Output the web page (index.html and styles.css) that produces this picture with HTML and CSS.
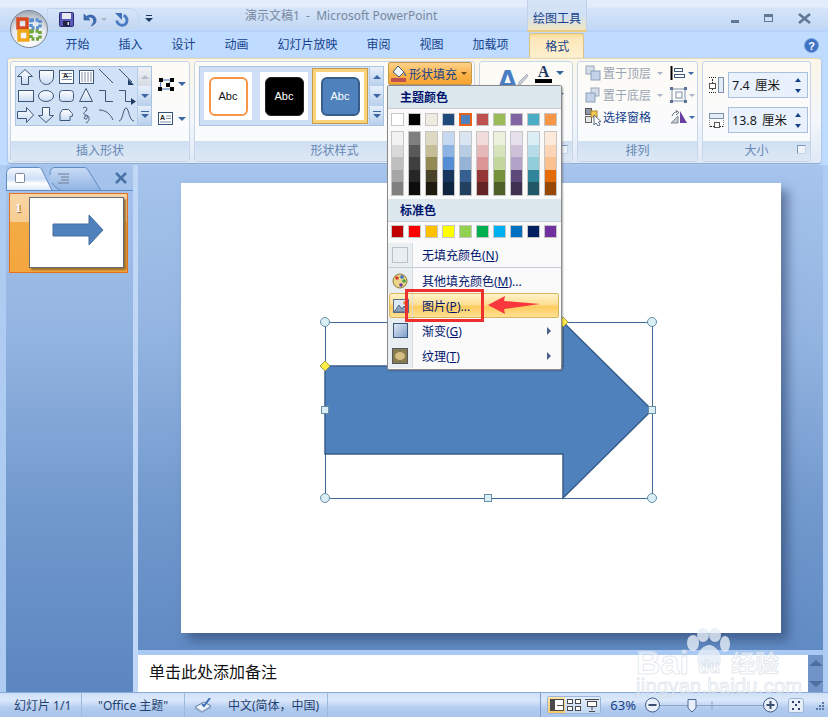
FILE: index.html
```html
<!DOCTYPE html>
<html lang="zh-CN">
<head>
    <meta charset="UTF-8">
    <title>演示文稿1 - Microsoft PowerPoint</title>
    <link rel="stylesheet" href="styles.css">
</head>
<body>
<div class="app">

    <!-- Title bar -->
    <header class="titlebar">
        <div class="qat">
            <svg class="qat-save" width="15" height="15" viewBox="0 0 15 15">
                <rect x="0.5" y="0.5" width="14" height="14" rx="1" fill="#5a58b8" stroke="#2c2a70"/>
                <rect x="3" y="1" width="9" height="6" fill="#e6e8f4"/>
                <rect x="4" y="9" width="7" height="5" fill="#23233f"/>
                <rect x="8.5" y="10" width="1.5" height="3" fill="#dcdcec"/>
            </svg>
            <svg class="qat-undo" width="14" height="15" viewBox="0 0 14 15">
                <path d="M1 2 V8 H7 L5 6 C7 4.500 10 5 10.500 8 C10.800 10 10 12 8 14 C11.500 13 13.500 10.500 13 7.500 C12.500 3.500 7.500 1.500 3.500 4.500 Z" fill="#3f6fb5" stroke="#2a5493" stroke-width="0.6"/>
            </svg>
            <span class="caret caret-gray qat-caret"></span>
            <svg class="qat-redo" width="15" height="15" viewBox="0 0 15 15">
                <path d="M9.500 3.500 A5 5 0 1 1 3 8.500" fill="none" stroke="#4a7cc2" stroke-width="3"/>
                <path d="M1 1 H8 V8 Z" fill="#3f6fb5"/>
            </svg>
        </div>
        <svg class="qat-more" width="8" height="8" viewBox="0 0 8 8">
            <rect x="1" y="0" width="6" height="1" fill="#1d3a63"/>
            <path d="M0 3 H8 L4 7 Z" fill="#1d3a63"/>
        </svg>
        <div class="doc-title">演示文稿1&nbsp; -&nbsp; Microsoft PowerPoint</div>
        <div class="context-tab">绘图工具</div>
        <div class="window-btns">
            <span class="btn-min"></span>
            <span class="btn-max"></span>
            <svg width="13" height="11" viewBox="0 0 13 11"><path d="M1 1 L12 10 M12 1 L1 10" stroke="#5f7894" stroke-width="2.600"/></svg>
        </div>
    </header>

    <!-- Tabs -->
    <nav class="tabs">
        <span class="tab">开始</span>
        <span class="tab">插入</span>
        <span class="tab">设计</span>
        <span class="tab">动画</span>
        <span class="tab">幻灯片放映</span>
        <span class="tab">审阅</span>
        <span class="tab">视图</span>
        <span class="tab">加载项</span>
        <span class="tab tab-active">格式</span>
        <svg class="help" width="15" height="15" viewBox="0 0 15 15">
            <circle cx="7.500" cy="7.500" r="7" fill="#3e72c4" stroke="#7fa3d8"/>
            <text x="7.500" y="11.500" text-anchor="middle" class="help-mark">?</text>
        </svg>
    </nav>

    <!-- Ribbon -->
    <section class="ribbon">

        <div class="group group-shapes">
            <div class="group-body">
                <div class="gallery gallery-shapes">
                    <svg class="shape-sheet" width="122" height="60" viewBox="0 0 122 60">
                        <defs>
                            <linearGradient id="shapeFill" x1="0" y1="0" x2="0" y2="1">
                                <stop offset="0" stop-color="#ffffff"/>
                                <stop offset="1" stop-color="#c9dcf3"/>
                            </linearGradient>
                        </defs>
                        <g fill="url(#shapeFill)" stroke="#3d5778">
                            <path d="M10 3.500 L17.500 10.500 H13.500 V18.500 H6.500 V10.500 H2.500 Z"/>
                            <path d="M24.500 4.500 H38.500 V11 C38.500 15 35 18.500 31.500 18.500 C27.500 18.500 24.500 15 24.500 11 Z"/>
                            <rect x="44.500" y="4.500" width="14" height="13" fill="#fff"/>
                            <rect x="64.500" y="4.500" width="14" height="13" fill="#fff"/>
                            <rect x="3.500" y="24.500" width="15" height="11"/>
                            <ellipse cx="31" cy="30" rx="7.500" ry="5.500"/>
                            <rect x="44.500" y="24.500" width="14" height="11" rx="3"/>
                            <path d="M71 22.500 L77.500 35.500 H64.500 Z"/>
                            <path d="M2.500 45.500 H11.500 V41.500 L18.500 49 L11.500 56.500 V52.500 H2.500 Z"/>
                            <path d="M27.500 41.500 H34.500 V49.500 H38.500 L31 56.500 L23.500 49.500 H27.500 Z"/>
                            <path d="M47.500 43.500 H53.500 L56 46 C57 47 58 48 57.500 50 L55 50.500 V54.500 H45 V47.500 Z"/>
                        </g>
                        <g fill="none" stroke="#3d5778">
                            <path d="M84 3 L98 17"/>
                            <path d="M104 3 L117 16"/>
                            <path d="M84 24.500 H90.500 V35.500 H98"/>
                            <path d="M104 24.500 H110.500 V35.500 H116"/>
                            <path d="M68 42 C71 40 73 42 71 45 C68 47 68 49 71 49 C74 50 72 54 70 53 C68 52 70 49 73 50 C75 51 74 56 71 57"/>
                            <path d="M84 44 C90 44 95 47 98 54"/>
                            <path d="M104 55 C108 55 108 42 111 42 C114 42 114 55 119 55"/>
                            <path d="M46.500 7.500 H50 M52 7.500 H57 M52 10.500 H57 M46.500 13.500 H57" stroke="#7d8ea5"/>
                            <path d="M67 6 V16 M70 6 V16 M73 6 V16 M76 6 V16" stroke="#7d8ea5"/>
                        </g>
                        <path d="M113 13 L119 19 H113 Z M116 32 L121 35.500 L116 39 Z" fill="#233e66"/>
                        <text x="48" y="12" class="sheet-letter">A</text>
                    </svg>
                    <div class="gallery-scroll">
                        <span class="scroll-btn scroll-off"><span class="caret caret-up"></span></span>
                        <span class="scroll-btn"><span class="caret"></span></span>
                        <span class="scroll-btn"><span class="caret caret-more"></span></span>
                    </div>
                </div>
                <div class="edit-col">
                    <div class="edit-item">
                        <svg width="18" height="14" viewBox="0 0 18 14">
                            <path d="M4 3 H15 L11 7.500 L15 12 H3 Z" fill="none" stroke="#3f6fb5"/>
                            <g fill="#000">
                                <rect x="2" y="1" width="4" height="4"/><rect x="13" y="1" width="4" height="4"/>
                                <rect x="9" y="6" width="4" height="4"/><rect x="1" y="10" width="4" height="4"/>
                                <rect x="13" y="10" width="4" height="4"/>
                            </g>
                        </svg>
                        <span class="caret"></span>
                    </div>
                    <div class="edit-item edit-item-low">
                        <svg width="15" height="13" viewBox="0 0 15 13">
                            <rect x="0.500" y="0.500" width="14" height="12" fill="#fff" stroke="#34527a"/>
                            <path d="M8 4 H13 M8 6.500 H13 M2 10 H13" stroke="#7d8ea5"/>
                            <text x="2" y="8" class="sheet-letter">A</text>
                        </svg>
                        <span class="caret"></span>
                    </div>
                </div>
            </div>
            <div class="group-label">插入形状</div>
        </div>

        <div class="group group-styles">
            <div class="group-body">
                <div class="gallery gallery-styles">
                    <div class="style-card"><span class="style-box style-outline">Abc</span></div>
                    <div class="style-card"><span class="style-box style-black">Abc</span></div>
                    <div class="style-card style-card-on"><span class="style-box style-blue">Abc</span></div>
                    <div class="gallery-scroll">
                        <span class="scroll-btn"><span class="caret caret-up"></span></span>
                        <span class="scroll-btn"><span class="caret"></span></span>
                        <span class="scroll-btn"><span class="caret caret-more"></span></span>
                    </div>
                </div>
                <div class="fill-btn">
                    <svg width="17" height="17" viewBox="0 0 17 17">
                        <path d="M7 1 L13 7 L8 12 L2 7 Z" fill="#f3f6fb" stroke="#3d5778"/>
                        <path d="M13 7 C15 9 15.500 11 14.500 11 C13.500 11 13 9 13 7Z" fill="#2f5fa8"/>
                        <rect x="0" y="13" width="15" height="4" fill="#c0504d"/>
                    </svg>
                    <span>形状填充</span>
                    <span class="caret caret-dark"></span>
                </div>
            </div>
            <div class="group-label">形状样式</div>
        </div>

        <div class="group group-art">
            <div class="group-body">
                <span class="art-a">A</span>
                <svg class="art-pen" width="10" height="12" viewBox="0 0 10 12">
                    <path d="M9 0 L10 2 L3 10 L0 12 L1 8 Z" fill="#c9ced6" stroke="#8a93a0" stroke-width="0.600"/>
                </svg>
                <div class="art-color">
                    <span class="art-letter">A</span>
                    <span class="art-bar"></span>
                </div>
                <div class="art-carets">
                    <span class="caret"></span>
                    <span class="caret"></span>
                </div>
            </div>
            <div class="group-label"><span class="launcher"></span></div>
        </div>

        <div class="group group-arrange">
            <div class="group-body">
                <div class="arrange-col">
                    <div class="arrange-row row-off">
                        <svg width="16" height="16" viewBox="0 0 16 16"><rect x="1" y="1" width="8" height="8" fill="#d5dde8" stroke="#9aa8bb"/><rect x="6" y="6" width="9" height="9" fill="#c3d2e6" stroke="#8ba0bb"/></svg>
                        <span>置于顶层</span><span class="caret caret-gray"></span>
                    </div>
                    <div class="arrange-row row-off">
                        <svg width="16" height="16" viewBox="0 0 16 16"><rect x="6" y="1" width="8" height="8" fill="#d5dde8" stroke="#9aa8bb"/><rect x="1" y="6" width="9" height="9" fill="#c3d2e6" stroke="#8ba0bb"/></svg>
                        <span>置于底层</span><span class="caret caret-gray"></span>
                    </div>
                    <div class="arrange-row">
                        <svg width="16" height="18" viewBox="0 0 16 18"><rect x="0.500" y="0.500" width="6" height="6" fill="#8f98a6" stroke="#555"/><rect x="0.500" y="8.500" width="6" height="6" fill="#e6e6e6" stroke="#666"/><rect x="6" y="3" width="6" height="6" fill="#f5c84f" stroke="#a9862c"/><path d="M9 7 V17 L11 15 L13 18 L15 17 L13.500 14 L16 13.500 Z" fill="#fff" stroke="#5b6c85"/></svg>
                        <span>选择窗格</span>
                    </div>
                </div>
                <div class="arrange-tools">
                    <div class="tool-item">
                        <svg width="16" height="14" viewBox="0 0 16 14"><path d="M1.500 0 V14" stroke="#000" stroke-width="2"/><rect x="4.500" y="2.500" width="8" height="3" fill="#fff" stroke="#3d5778"/><rect x="4.500" y="8.500" width="10" height="3" fill="#fff" stroke="#3d5778"/></svg>
                        <span class="caret"></span>
                    </div>
                    <div class="tool-item tool-off">
                        <svg width="17" height="16" viewBox="0 0 17 16"><rect x="2" y="2" width="13" height="12" fill="none" stroke="#7d90aa"/><rect x="6" y="5" width="6" height="6" fill="none" stroke="#7d90aa"/><g fill="#5b7396"><rect x="0" y="0" width="3" height="3"/><rect x="14" y="0" width="3" height="3"/><rect x="0" y="13" width="3" height="3"/><rect x="14" y="13" width="3" height="3"/></g></svg>
                        <span class="caret caret-gray"></span>
                    </div>
                    <div class="tool-item">
                        <svg width="17" height="14" viewBox="0 0 17 14"><path d="M1 13 L8 6 V13 Z" fill="#c9ced6" stroke="#7d8794"/><path d="M10 1 L17 13 H10 Z" fill="#6a3fa0"/><path d="M2 6 C3 3 5 2 7 2 L6 0.500 L9 2.500 L6 5" fill="none" stroke="#5f6f85"/></svg>
                        <span class="caret"></span>
                    </div>
                </div>
            </div>
            <div class="group-label">排列</div>
        </div>

        <div class="group group-size">
            <div class="group-body">
                <div class="size-row">
                    <svg width="15" height="16" viewBox="0 0 15 16">
                        <rect x="9.500" y="0.500" width="5" height="15" fill="#e4ecf7" stroke="#7d90aa"/>
                        <path d="M0 0.500 H7 M0 15.500 H7" stroke="#222" stroke-dasharray="1 1"/>
                        <path d="M3.500 2 V14" stroke="#222" stroke-dasharray="2 1"/>
                        <rect x="0.500" y="6.500" width="6" height="5" fill="#fff" stroke="#555"/>
                    </svg>
                    <div class="size-input"><span>7.4 厘米</span><span class="spinner"><span class="caret caret-up caret-navy"></span><span class="caret caret-navy"></span></span></div>
                </div>
                <div class="size-row">
                    <svg width="15" height="15" viewBox="0 0 15 15">
                        <rect x="0.500" y="0.500" width="14" height="5" fill="#e4ecf7" stroke="#7d90aa"/>
                        <path d="M0 7 V14 M15 7 V14" stroke="#222" stroke-dasharray="1 1"/>
                        <path d="M1 13.500 H14" stroke="#222" stroke-dasharray="2 1"/>
                        <rect x="5.500" y="9.500" width="5" height="5" fill="#fff" stroke="#555"/>
                    </svg>
                    <div class="size-input"><span>13.8 厘米</span><span class="spinner"><span class="caret caret-up caret-navy"></span><span class="caret caret-navy"></span></span></div>
                </div>
            </div>
            <div class="group-label">大小<span class="launcher"></span></div>
        </div>
    </section>

    <!-- Workspace -->
    <main class="workspace">
        <aside class="side-pane">
            <svg class="pane-tabs" width="127" height="24" viewBox="0 0 127 24">
                <defs>
                    <linearGradient id="tabOn" x1="0" y1="0" x2="0" y2="1"><stop offset="0" stop-color="#f4f8fe"/><stop offset="0.5" stop-color="#cfe0f7"/><stop offset="0.7" stop-color="#ffffff"/><stop offset="1" stop-color="#d7e6fa"/></linearGradient>
                    <linearGradient id="tabOff" x1="0" y1="0" x2="0" y2="1"><stop offset="0" stop-color="#c9dcf6"/><stop offset="1" stop-color="#90b3e2"/></linearGradient>
                </defs>
                <path d="M46 23.500 L36 3 C35 1 34 0.500 32 0.500 H7 C4 0.500 1 2 0.500 6 V23.500" fill="url(#tabOn)" stroke="#5f8cc4"/>
                <path d="M44 8 C44 2 46 0.500 49 0.500 H78 C80 0.500 81 1.500 82 3 L95 23.500 H55 C52 22 48 20 46 16" fill="url(#tabOff)" stroke="#5f8cc4"/>
                <path d="M0 23.500 H127" stroke="#5f8cc4"/>
                <rect x="9.500" y="6.500" width="9" height="9" rx="1" fill="#fff" stroke="#7b8797"/>
                <path d="M52 7 H63 M55 10 H63 M55 13 H63 M52 16 H63" stroke="#6d7c92"/>
                <path d="M110 6 L120 16 M120 6 L110 16" stroke="#4a74a8" stroke-width="2.500"/>
            </svg>
            <div class="thumb">
                <span class="thumb-num">1</span>
                <div class="thumb-slide">
                    <svg width="93" height="69" viewBox="0 0 93 69">
                        <path d="M23 26 H59 V17 L73 32 L59 47 V38 H23 Z" fill="#4f81bd" stroke="#446f9f"/>
                    </svg>
                </div>
            </div>
        </aside>

        <div class="main-pane">
            <div class="slide-pane">
                <div class="slide">
                    <svg class="slide-canvas" width="600" height="450" viewBox="0 0 600 450">
                        <rect x="144.500" y="139.500" width="327" height="176" fill="none" stroke="#3f6a97"/>
                        <path d="M144 183 H382 V139 L471 227 L382 315 V271 H144 Z" fill="#4f81bd" stroke="#385d8a" stroke-width="1.500"/>
                        <g fill="#d9eef5" stroke="#6b8da6">
                            <circle cx="144" cy="139" r="4.500"/>
                            <circle cx="471" cy="139" r="4.500"/>
                            <circle cx="144" cy="315" r="4.500"/>
                            <circle cx="471" cy="315" r="4.500"/>
                            <rect x="140.500" y="223.500" width="7" height="7"/>
                            <rect x="467.500" y="223.500" width="7" height="7"/>
                            <rect x="303.500" y="311.500" width="7" height="7"/>
                        </g>
                        <g fill="#ffee44" stroke="#a09a50">
                            <path d="M144 178 L149 183 L144 188 L139 183 Z"/>
                            <path d="M382 134 L387 139 L382 144 L377 139 Z"/>
                        </g>
                    </svg>
                </div>
            </div>
            <div class="notes-row">
                <div class="notes">单击此处添加备注</div>
                <div class="notes-scroll">
                    <span class="caret caret-up caret-slate"></span>
                    <span class="caret caret-slate"></span>
                </div>
            </div>
        </div>
    </main>

    <!-- Status bar -->
    <footer class="statusbar">
        <span class="status-item status-slide">幻灯片 1/1</span>
        <span class="status-item status-theme">"Office 主题"</span>
        <span class="status-item status-lang">
            <svg width="18" height="15" viewBox="0 0 18 15">
                <path d="M1 9 L10 4 L17 8 L8 14 Z" fill="#eef3fb" stroke="#5f7fa8"/>
                <path d="M1 9 L8 13 L17 8 V10 L8 15 L1 11 Z" fill="#8fa8c9"/>
                <path d="M8 6 L10 8 L16 0" fill="none" stroke="#3f6fb5" stroke-width="2"/>
            </svg>
            <span>中文(简体，中国)</span>
        </span>
        <div class="status-right">
            <div class="view-btns">
                <span class="view-btn view-btn-on">
                    <svg width="14" height="12" viewBox="0 0 14 12"><rect x="0.500" y="0.500" width="13" height="11" fill="#fff" stroke="#4a4a4a"/><rect x="1" y="1" width="4" height="10" fill="#4a4a4a"/><path d="M7 6.500 H13" stroke="#4a4a4a"/></svg>
                </span>
                <span class="view-btn">
                    <svg width="14" height="12" viewBox="0 0 14 12"><g fill="#fff" stroke="#4a4a4a"><rect x="0.500" y="0.500" width="5" height="4"/><rect x="8.500" y="0.500" width="5" height="4"/><rect x="0.500" y="7.500" width="5" height="4"/><rect x="8.500" y="7.500" width="5" height="4"/></g></svg>
                </span>
                <span class="view-btn">
                    <svg width="14" height="13" viewBox="0 0 14 13"><path d="M0 0.500 H14" stroke="#4a4a4a"/><rect x="2.500" y="2.500" width="9" height="5" fill="#fff" stroke="#4a4a4a"/><path d="M7 8 V11 M4 12.500 H10" stroke="#4a4a4a"/></svg>
                </span>
            </div>
            <span class="zoom-pct">63%</span>
            <svg class="zoom-ctl" width="183" height="20" viewBox="0 0 183 20">
                <path d="M14 10.500 H118" stroke="#8ba4c8"/>
                <path d="M67 6 V15" stroke="#8ba4c8"/>
                <g fill="#e9f0fa" stroke="#3f5f8a">
                    <circle cx="7.500" cy="10" r="7"/>
                    <circle cx="125.500" cy="10" r="7"/>
                </g>
                <path d="M3.500 10 H11.500" stroke="#3a4f70" stroke-width="2"/>
                <path d="M121.500 10 H129.500 M125.500 6 V14" stroke="#3a4f70" stroke-width="2"/>
                <path d="M43 4.500 H51 V13 L47 17 L43 13 Z" fill="#e8effa" stroke="#4a6a96"/>
                <rect x="143.500" y="3.500" width="15" height="14" rx="2" fill="#e6eefa" stroke="#9fb5d4"/>
                <g fill="#2f4466"><rect x="147" y="6" width="2" height="2"/><rect x="153" y="6" width="2" height="2"/><rect x="147" y="13" width="2" height="2"/><rect x="153" y="13" width="2" height="2"/><rect x="150" y="9" width="2" height="2"/></g>
                <g fill="#5b7aa6"><rect x="177" y="7" width="2" height="2"/><rect x="174" y="10" width="2" height="2"/><rect x="177" y="10" width="2" height="2"/><rect x="171" y="13" width="2" height="2"/><rect x="174" y="13" width="2" height="2"/><rect x="177" y="13" width="2" height="2"/></g>
            </svg>
        </div>
    </footer>

    <!-- Office button sits over the title bar and the tabs -->
    <div class="office-btn">
        <svg width="38" height="38" viewBox="0 0 38 38">
            <defs>
                <radialGradient id="orb" cx="0.500" cy="0.800" r="0.800"><stop offset="0" stop-color="#ffffff"/><stop offset="0.600" stop-color="#e6e9ef"/><stop offset="1" stop-color="#9aa3af"/></radialGradient>
            </defs>
            <circle cx="19" cy="19" r="18.500" fill="url(#orb)" stroke="#7d8794"/>
            <path d="M8 9 H17 V18 H8 Z" fill="none" stroke="#d64a20" stroke-width="3.500"/>
            <path d="M21 10 H30 V18 H21 Z" fill="none" stroke="#5a8fd0" stroke-width="3.500" stroke-dasharray="3 1.500"/>
            <path d="M9 21 H18 V30 H9 Z" fill="none" stroke="#f0a818" stroke-width="3.500"/>
            <path d="M21 21 H30 V29 H21 Z" fill="none" stroke="#6fa53a" stroke-width="3.500" stroke-dasharray="3 1.500"/>
        </svg>
    </div>

    <!-- Fill colour menu -->
    <div class="menu">
        <div class="menu-head">主题颜色</div>
        <div class="swatch-row swatch-row-top">
            <span class="swatch th-1"></span><span class="swatch th-2"></span><span class="swatch th-3"></span><span class="swatch th-4"></span><span class="swatch th-5 swatch-on"></span>
            <span class="swatch th-6"></span><span class="swatch th-7"></span><span class="swatch th-8"></span><span class="swatch th-9"></span><span class="swatch th-10"></span>
        </div>
        <div class="swatch-row swatch-row-tints">
            <span class="tint tn-1"></span><span class="tint tn-2"></span><span class="tint tn-3"></span><span class="tint tn-4"></span><span class="tint tn-5"></span>
            <span class="tint tn-6"></span><span class="tint tn-7"></span><span class="tint tn-8"></span><span class="tint tn-9"></span><span class="tint tn-10"></span>
        </div>
        <div class="menu-head menu-head-std">标准色</div>
        <div class="swatch-row swatch-row-std">
            <span class="swatch st-1"></span><span class="swatch st-2"></span><span class="swatch st-3"></span><span class="swatch st-4"></span><span class="swatch st-5"></span>
            <span class="swatch st-6"></span><span class="swatch st-7"></span><span class="swatch st-8"></span><span class="swatch st-9"></span><span class="swatch st-10"></span>
        </div>
        <div class="menu-row menu-row-short">
            <span class="menu-icon"><span class="no-fill"></span></span>
            <span class="menu-text">无填充颜色(<u>N</u>)</span>
        </div>
        <div class="menu-sep"></div>
        <div class="menu-row">
            <span class="menu-icon">
                <svg width="16" height="16" viewBox="0 0 16 16">
                    <ellipse cx="8" cy="8" rx="7" ry="7" fill="#e9d58a" stroke="#8e7a38"/>
                    <circle cx="5" cy="5" r="1.800" fill="#d9392a"/><circle cx="10" cy="4" r="1.800" fill="#2f6fc9"/>
                    <circle cx="12" cy="8" r="1.800" fill="#3ea040"/><circle cx="9" cy="12" r="1.800" fill="#6a3fa0"/>
                </svg>
            </span>
            <span class="menu-text">其他填充颜色(<u>M</u>)...</span>
        </div>
        <div class="menu-row menu-row-hot">
            <span class="menu-icon">
                <svg width="16" height="16" viewBox="0 0 16 16">
                    <rect x="0.500" y="1.500" width="15" height="13" fill="#dbe9f8" stroke="#5d6f88"/>
                    <path d="M1 14 L6 7 L9 11 L11 8 L15 14 Z" fill="#8da3bd" stroke="#55677f"/>
                    <circle cx="12" cy="5" r="1.800" fill="#f07b2a"/>
                </svg>
            </span>
            <span class="menu-text">图片(<u>P</u>)...</span>
        </div>
        <div class="menu-row">
            <span class="menu-icon"><span class="grad-fill"></span></span>
            <span class="menu-text">渐变(<u>G</u>)</span>
            <span class="submenu"></span>
        </div>
        <div class="menu-row">
            <span class="menu-icon"><span class="texture-fill"><span></span></span></span>
            <span class="menu-text">纹理(<u>T</u>)</span>
            <span class="submenu"></span>
        </div>
    </div>

    <!-- Red annotations from the author of the screenshot -->
    <div class="note-box"></div>
    <svg class="note-arrow" width="52" height="20" viewBox="0 0 52 20">
        <path d="M0 10 L17 1 L16 6 L52 9 L16 14 L17 19 Z" fill="#f8383c"/>
    </svg>

    <!-- Watermark -->
    <div class="watermark">
        <svg class="wm-paw" width="46" height="40" viewBox="0 0 46 40">
            <g fill="#e6edf6" fill-opacity="0.8">
                <ellipse cx="8" cy="15" rx="6" ry="8"/>
                <ellipse cx="18" cy="7" rx="6" ry="7"/>
                <ellipse cx="30" cy="7" rx="6" ry="7"/>
                <ellipse cx="40" cy="16" rx="5" ry="8"/>
                <path d="M12 32 C12 22 20 17 24 17 C30 17 36 24 36 32 C36 38 30 40 24 40 C18 40 12 38 12 32 Z"/>
            </g>
        </svg>
        <span class="wm-bai">Bai</span>
        <span class="wm-du">du</span>
        <span class="wm-cn">经验</span>
        <span class="wm-url">jingyan.baidu.com</span>
    </div>
</div>
</body>
</html>
```

FILE: styles.css
```css
* {
    box-sizing: border-box;
}

html, body {
    margin: 0;
    padding: 0;
}

body {
    width: 828px;
    height: 717px;
    overflow: hidden;
    font-family: "Noto Sans", "Noto Sans CJK SC", sans-serif;
    font-size: 12px;
    color: #15428b;
}

svg {
    display: block;
    flex: none;
}

.app {
    position: relative;
    width: 828px;
    height: 717px;
    display: flex;
    flex-direction: column;
    background-color: #bfdbff;
    overflow: hidden;
}

/* Small dropdown triangles, used all over the ribbon */
.caret {
    display: inline-block;
    width: 0;
    height: 0;
    flex: none;
    border-left: 4px solid transparent;
    border-right: 4px solid transparent;
    border-top: 4px solid #3a66a6;
}

.caret-up {
    border-top: 0;
    border-bottom: 4px solid #3a66a6;
}

.caret-gray {
    border-top-color: #a8b4c4;
}

.caret-dark {
    border-top-color: #6a4a10;
}

.caret-navy {
    border-top-color: #15428b;
    border-bottom-color: #15428b;
}

.caret-slate {
    border-left-width: 7px;
    border-right-width: 7px;
    border-top-width: 6px;
    border-bottom-width: 6px;
    border-top-color: #4d6f9e;
    border-bottom-color: #4d6f9e;
}

.caret-more {
    position: relative;
}

.caret-more::before {
    content: "";
    position: absolute;
    left: -4px;
    top: -7px;
    width: 8px;
    height: 1px;
    background-color: #3a66a6;
}

/* Title bar */
.titlebar {
    display: flex;
    align-items: center;
    height: 32px;
    flex: none;
    background: linear-gradient(#e3edfb 0, #e3edfb 7px, #d5e4f8 8px, #c6daf6 26px, #bcd6fb 31px, #a9cbf5 32px);
}

.qat {
    display: flex;
    align-items: center;
    width: 93px;
    height: 22px;
    margin-left: 47px;
    margin-top: 6px;
    border: 1px solid #c3d6ef;
    border-radius: 0 11px 11px 0;
    background: linear-gradient(#d6e5f9, #c2d6f2);
}

.qat-save {
    margin-left: 11px;
}

.qat-undo {
    margin-left: 9px;
}

.qat-caret {
    margin-left: 4px;
    border-left-width: 3px;
    border-right-width: 3px;
    border-top-width: 3px;
}

.qat-redo {
    margin-left: 7px;
}

.qat-more {
    margin-left: 5px;
    margin-top: 6px;
}

.doc-title {
    width: 282px;
    margin-left: 92px;
    margin-top: -2px;
    color: #77889f;
    font-size: 12px;
    white-space: nowrap;
}

.context-tab {
    width: 60px;
    height: 32px;
    padding-top: 9px;
    text-align: center;
    color: #15428b;
    border-left: 1px solid #c0d0e6;
    border-right: 1px solid #c0d0e6;
    border-bottom: 2px solid #e8cb7e;
    background: linear-gradient(#d7e4f6, #d0e0f5 50%, #f2e6c2);
}

.window-btns {
    display: flex;
    align-items: center;
    gap: 25px;
    margin-left: auto;
    margin-right: 17px;
    margin-top: 4px;
}

.btn-min {
    width: 8px;
    height: 3px;
    margin-top: 6px;
    background-color: #5f7894;
}

.btn-max {
    width: 9px;
    height: 8px;
    border: 1px solid #5f7894;
    border-top-width: 3px;
}

/* Tabs */
.tabs {
    display: flex;
    align-items: center;
    height: 26px;
    flex: none;
    padding-left: 51px;
}

.tab {
    padding: 0 14.5px;
    line-height: 26px;
    color: #15428b;
    white-space: nowrap;
}

.tab-active {
    margin-left: 6px;
    padding: 0 15px;
    width: 55px;
    height: 26px;
    margin-top: 1px;
    text-align: center;
    border: 1px solid #dcc184;
    border-bottom: 0;
    border-radius: 3px 3px 0 0;
    background: linear-gradient(#fbd98d 0, #fde7b8 4px, #fdf0d0 100%);
}

.help {
    margin-left: auto;
    margin-right: 9px;
}

.help-mark {
    font-family: "Liberation Sans", sans-serif;
    font-size: 11px;
    font-weight: bold;
    fill: #fff;
}

/* Ribbon */
.ribbon {
    display: flex;
    gap: 4px;
    height: 105px;
    flex: none;
    margin: 0 7px 0 8px;
    padding: 2px 0 0 2px;
    border-top: 1px solid #e8d9b0;
    border-radius: 3px;
    background: linear-gradient(#fbf6e8, #f3f6fb 60%, #dfe9f6);
    box-shadow: 0 1px 2px #7e9cc4;
}

.group {
    display: flex;
    flex-direction: column;
    height: 101px;
    border: 1px solid #c7d5e8;
    border-radius: 3px;
    background: linear-gradient(#fdfbf5, #fafbfd 70%);
}

.group-body {
    flex: 1;
    display: flex;
    min-height: 0;
}

.group-label {
    position: relative;
    flex: none;
    height: 20px;
    line-height: 20px;
    text-align: center;
    color: #6587b4;
    background: linear-gradient(#cfdff2, #dde8f5);
}

.launcher {
    position: absolute;
    right: 4px;
    top: 4px;
    width: 9px;
    height: 9px;
    border: 1px solid #7f97b8;
    border-right-color: #c7d5e8;
    border-bottom-color: #c7d5e8;
    background-color: #eef3fa;
}

.group-shapes {
    width: 180px;
}

.group-styles {
    width: 281px;
}

.group-art {
    width: 94px;
    margin-left: 0;
}

.group-arrange {
    width: 121px;
}

.group-size {
    width: 109px;
}

.gallery {
    display: flex;
    height: 60px;
    margin: 4px 0 0 4px;
    border: 1px solid #aac3e0;
    background-color: #d2e2f6;
}

.gallery-shapes {
    width: 137px;
}

.shape-sheet {
    margin: -1px 0 0 -1px;
}

.sheet-letter {
    font-family: "Liberation Sans", sans-serif;
    font-size: 7px;
    font-weight: bold;
    fill: #222;
}

.gallery-scroll {
    display: flex;
    flex-direction: column;
    align-self: stretch;
    width: 14px;
    margin-left: auto;
    flex: none;
}

.scroll-btn {
    flex: 1;
    display: flex;
    align-items: center;
    justify-content: center;
    border-left: 1px solid #b6cbe6;
    border-top: 1px solid #e6eef9;
    background: linear-gradient(#e4eefb, #b8cfeb);
}

.scroll-off {
    background: linear-gradient(#eef0f4, #d7dce4);
}

.scroll-off .caret {
    border-bottom-color: #b4bcc9;
}

.edit-col {
    display: flex;
    flex-direction: column;
    margin-left: 5px;
}

.edit-item {
    display: flex;
    align-items: center;
    gap: 3px;
    margin-top: 15px;
}

.edit-item-low {
    margin-top: 21px;
    margin-left: 1px;
    gap: 5px;
}

/* Shape styles */
.gallery-styles {
    width: 185px;
    padding-left: 4px;
    align-items: center;
    background-color: #cfe0f6;
}

.style-card {
    display: flex;
    align-items: center;
    justify-content: center;
    width: 48px;
    height: 48px;
    margin-right: 8px;
    background-color: #fff;
}

.style-card-on {
    width: 56px;
    height: 56px;
    margin-right: 0;
    margin-left: -4px;
    border: 1px solid #c89a4a;
    box-shadow: inset 0 0 0 3px #fbd37a;
}

.style-box {
    display: flex;
    align-items: center;
    justify-content: center;
    width: 39px;
    height: 39px;
    border-radius: 6px;
    font-family: "Liberation Sans", sans-serif;
    font-size: 11px;
}

.style-outline {
    color: #111;
    background-color: #fff;
    border: 2px solid #f79646;
}

.style-black {
    color: #fff;
    background-color: #000;
    border: 1px solid #222;
}

.style-blue {
    color: #fff;
    background-color: #4f81bd;
    border: 2px solid #385d8a;
}

.fill-btn {
    display: flex;
    align-items: center;
    width: 84px;
    height: 23px;
    margin: 0 0 0 4px;
    padding-left: 2px;
    gap: 1px;
    color: #15428b;
    white-space: nowrap;
    border: 1px solid #c59a4a;
    border-radius: 2px;
    background: linear-gradient(#fdd28a, #fbb24a 55%, #f9a431);
}

.fill-btn .caret {
    margin-left: 3px;
    border-left-width: 3px;
    border-right-width: 3px;
    border-top-width: 3px;
}

/* WordArt group, most of it is under the open menu */
.art-a {
    width: 24px;
    margin: 0 0 0 16px;
    font-family: "Liberation Sans", sans-serif;
    font-size: 32px;
    font-weight: bold;
    line-height: 38px;
    color: #4a7fc4;
}

.art-pen {
    margin: 12px 0 0 -2px;
}

.art-color {
    display: flex;
    flex-direction: column;
    align-items: center;
    width: 17px;
    margin: 3px 0 0 7px;
}

.art-letter {
    font-family: "Liberation Serif", serif;
    font-size: 16px;
    font-weight: bold;
    line-height: 14px;
    color: #1f3864;
}

.art-bar {
    width: 17px;
    height: 4px;
    background-color: #000;
}

.art-carets {
    display: flex;
    flex-direction: column;
    gap: 18px;
    margin: 9px 0 0 4px;
}

/* Arrange */
.group-arrange .group-body {
    padding-left: 7px;
}

.arrange-col {
    width: 85px;
    flex: none;
}

.arrange-row {
    display: flex;
    align-items: center;
    height: 22px;
    gap: 2px;
    white-space: nowrap;
}

.arrange-row .caret {
    margin-left: 4px;
    border-left-width: 3px;
    border-right-width: 3px;
    border-top-width: 3px;
}

.row-off {
    color: #9aa5b3;
}

.tool-item {
    display: flex;
    align-items: center;
    height: 22px;
    gap: 2px;
}

.tool-off .caret,
.tool-item .caret {
    border-left-width: 3px;
    border-right-width: 3px;
    border-top-width: 3px;
}

/* Size */
.group-size .group-body {
    flex-direction: column;
    gap: 9px;
    padding: 10px 0 0 6px;
}

.size-row {
    display: flex;
    align-items: center;
    gap: 4px;
}

.size-input {
    display: flex;
    align-items: center;
    justify-content: space-between;
    width: 80px;
    height: 26px;
    padding: 0 6px 2px 3px;
    font-size: 12.500px;
    word-spacing: 2px;
    color: #1a1a1a;
    border: 1px solid #a9bfdc;
    background-color: #e9f1fc;
}

.spinner {
    display: flex;
    flex-direction: column;
    gap: 7px;
    margin-top: 2px;
}

.spinner .caret {
    border-left-width: 3.500px;
    border-right-width: 3.500px;
}

/* Workspace */
.workspace {
    flex: 1;
    display: flex;
    min-height: 0;
    margin-top: 2px;
    border-left: 6px solid #aecbf2;
    border-right: 5px solid #aecbf2;
    background: linear-gradient(#a6c4ec 0, #95b6e2 30%, #7299cd 65%, #5b86c0 100%);
}

.side-pane {
    width: 132px;
    flex: none;
    padding-top: 2px;
    border-right: 5px solid #c0d7f6;
}

.thumb {
    display: flex;
    width: 119px;
    height: 80px;
    margin: 2px 0 0 3px;
    padding: 3px 3px 0 0;
    border: 1px solid #e8701a;
    background: linear-gradient(#f9d6a6 0, #f8cd92 36%, #f4ab45 36%, #f3a63d 100%);
}

.thumb-num {
    width: 19px;
    padding: 3px 0 0 5px;
    font-family: "Liberation Serif", serif;
    font-size: 13px;
    font-weight: bold;
    color: #fff;
    text-shadow: 1px 1px 1px #8a5a20;
}

.thumb-slide {
    width: 95px;
    height: 71px;
    background-color: #fff;
    border: 1px solid #666c75;
    box-shadow: 2px 2px 2px #9a6a2a;
}

.main-pane {
    flex: 1;
    display: flex;
    flex-direction: column;
    min-width: 0;
}

.slide-pane {
    flex: 1;
    padding: 18px 0 0 43px;
    min-height: 0;
}

.slide {
    width: 600px;
    height: 450px;
    background-color: #fff;
    box-shadow: 7px 7px 10px rgba(40, 60, 100, 0.55);
}

.notes-row {
    display: flex;
    height: 42px;
    flex: none;
    border-top: 5px solid #a9c9f4;
}

.notes {
    flex: 1;
    padding: 5px 0 0 11px;
    font-size: 16px;
    line-height: 24px;
    color: #111;
    background-color: #fff;
}

.notes-scroll {
    display: flex;
    flex-direction: column;
    align-items: center;
    justify-content: space-between;
    width: 15px;
    padding: 5px 0 5px;
    background-color: #7094c8;
}

/* Status bar */
.statusbar {
    display: flex;
    align-items: stretch;
    height: 25px;
    flex: none;
    color: #1f3f70;
    background: linear-gradient(#cfe0f7, #dbe8fa 30%, #b3ccef 62%, #a9c5ec);
    border-top: 1px solid #89a9d8;
}

.status-item {
    display: flex;
    align-items: center;
    white-space: nowrap;
    border-right: 1px solid #9db8dd;
}

.status-slide {
    width: 82px;
    padding-left: 14px;
}

.status-theme {
    width: 103px;
    padding-left: 16px;
}

.status-lang {
    width: 143px;
    gap: 16px;
    padding-left: 9px;
}

.status-right {
    display: flex;
    align-items: center;
    margin-left: auto;
    width: 288px;
    padding-left: 6px;
    border-left: 1px solid #7e9ccb;
}

.view-btns {
    display: flex;
    width: 55px;
    height: 18px;
    border: 1px solid #9ab5dc;
    border-radius: 2px;
    background: linear-gradient(#e4eefb, #c3d7f2);
}

.view-btn {
    flex: 1;
    display: flex;
    align-items: center;
    justify-content: center;
}

.view-btn-on {
    background: linear-gradient(#fde4a8, #fbc765);
}

.zoom-pct {
    width: 26px;
    margin-left: 9px;
    font-size: 13px;
    color: #15428b;
}

.zoom-ctl {
    margin-left: 9px;
}

/* Office orb */
.office-btn {
    position: absolute;
    left: 10px;
    top: 10px;
}

/* Fill colour menu */
.menu {
    position: absolute;
    left: 387px;
    top: 85px;
    width: 175px;
    height: 285px;
    border: 1px solid #8a8a8a;
    border-radius: 2px;
    background-color: #fafafa;
    box-shadow: 1px 1px 2px rgba(60, 60, 60, 0.4);
}

.menu-head {
    height: 23px;
    padding-left: 12px;
    line-height: 24px;
    font-weight: bold;
    color: #00156e;
    background-color: #dde7ee;
    border-bottom: 1px solid #c5ced6;
}

.menu-head-std {
    margin-top: 3px;
}

.swatch-row {
    display: flex;
    gap: 4px;
    padding-left: 3px;
}

.swatch-row-top {
    margin-top: 4px;
}

.swatch-row-tints {
    margin-top: 5px;
}

.swatch-row-std {
    margin-top: 3px;
}

.swatch {
    width: 13px;
    height: 13px;
    border: 1px solid #c6c6c6;
}

.swatch-on {
    border: 2px solid #e8621a;
}

.tint {
    width: 13px;
    height: 65px;
    border: 1px solid #c6c6c6;
}

.th-1 { background-color: #ffffff; }
.th-2 { background-color: #000000; }
.th-3 { background-color: #eeece1; }
.th-4 { background-color: #1f497d; }
.th-5 { background-color: #4f81bd; }
.th-6 { background-color: #c0504d; }
.th-7 { background-color: #9bbb59; }
.th-8 { background-color: #8064a2; }
.th-9 { background-color: #4bacc6; }
.th-10 { background-color: #f79646; }

.st-1 { background-color: #c00000; }
.st-2 { background-color: #ff0000; }
.st-3 { background-color: #ffc000; }
.st-4 { background-color: #ffff00; }
.st-5 { background-color: #92d050; }
.st-6 { background-color: #00b050; }
.st-7 { background-color: #00b0f0; }
.st-8 { background-color: #0070c0; }
.st-9 { background-color: #002060; }
.st-10 { background-color: #7030a0; }

.tn-1 { background: linear-gradient(#f2f2f2 20%, #d9d9d9 20% 40%, #bfbfbf 40% 60%, #a6a6a6 60% 80%, #808080 80%); }
.tn-2 { background: linear-gradient(#7f7f7f 20%, #595959 20% 40%, #3f3f3f 40% 60%, #262626 60% 80%, #0d0d0d 80%); }
.tn-3 { background: linear-gradient(#ddd9c3 20%, #c4bd97 20% 40%, #938953 40% 60%, #494429 60% 80%, #1d1b10 80%); }
.tn-4 { background: linear-gradient(#c6d9f0 20%, #8db3e2 20% 40%, #548dd4 40% 60%, #17365d 60% 80%, #0f243e 80%); }
.tn-5 { background: linear-gradient(#dbe5f1 20%, #b8cce4 20% 40%, #95b3d7 40% 60%, #366092 60% 80%, #244061 80%); }
.tn-6 { background: linear-gradient(#f2dcdb 20%, #e5b9b7 20% 40%, #d99694 40% 60%, #953734 60% 80%, #632423 80%); }
.tn-7 { background: linear-gradient(#ebf1dd 20%, #d7e3bc 20% 40%, #c3d69b 40% 60%, #76923c 60% 80%, #4f6128 80%); }
.tn-8 { background: linear-gradient(#e5e0ec 20%, #ccc1d9 20% 40%, #b2a2c7 40% 60%, #5f497a 60% 80%, #3f3151 80%); }
.tn-9 { background: linear-gradient(#dbeef3 20%, #b7dde8 20% 40%, #92cddc 40% 60%, #31859b 60% 80%, #205867 80%); }
.tn-10 { background: linear-gradient(#fdeada 20%, #fbd5b5 20% 40%, #fac08f 40% 60%, #e36c09 60% 80%, #974806 80%); }

.menu-row {
    display: flex;
    align-items: center;
    height: 25px;
    color: #00156e;
}

.menu-row-short {
    height: 24px;
    margin-top: 5px;
}

.menu-sep {
    height: 1px;
    background-color: #c5ced6;
}

.menu-row-hot {
    margin: 0 2px 0 1px;
    border: 1px solid #d9b55e;
    border-radius: 2px;
    background: linear-gradient(#fff3c9, #fedf94 45%, #fdcb5e 55%, #fee193);
}

.menu-row-hot .menu-icon {
    width: 23px;
    background: transparent;
}

.menu-row-hot .menu-text {
    padding-left: 9px;
}

.menu-icon {
    display: flex;
    align-items: center;
    justify-content: center;
    width: 25px;
    height: 100%;
    flex: none;
    background-color: #e9eef0;
    border-right: 1px solid #d5dcdf;
}

.menu-text {
    padding-left: 9px;
    white-space: nowrap;
}

.no-fill {
    width: 16px;
    height: 16px;
    border: 1px solid #b9c2c7;
}

.grad-fill {
    width: 15px;
    height: 15px;
    border: 1px solid #3a5578;
    background: linear-gradient(135deg, #dfe8f5, #7f9fcb);
}

.texture-fill {
    display: flex;
    align-items: center;
    justify-content: center;
    width: 16px;
    height: 16px;
    border: 1px solid #555;
    background-color: #8a7a52;
}

.texture-fill span {
    width: 10px;
    height: 8px;
    border-radius: 50%;
    background-color: #d6bd80;
}

.submenu {
    margin-left: auto;
    margin-right: 10px;
    border-top: 4px solid transparent;
    border-bottom: 4px solid transparent;
    border-left: 4px solid #4a5f8a;
}

/* Annotations */
.note-box {
    position: absolute;
    left: 405px;
    top: 289px;
    width: 79px;
    height: 33px;
    border: 3px solid #ee2f2f;
}

.note-arrow {
    position: absolute;
    left: 488px;
    top: 295px;
}

/* Watermark */
.watermark {
    position: absolute;
    left: 630px;
    top: 622px;
    width: 198px;
    height: 95px;
    color: rgba(255, 255, 255, 0.5);
    -webkit-text-stroke: 1px rgba(200, 210, 222, 0.5);
    white-space: nowrap;
}

.wm-paw {
    position: absolute;
    left: 55px;
    top: 6px;
}

.wm-bai {
    position: absolute;
    left: 6px;
    top: 27px;
    font-family: "Liberation Sans", sans-serif;
    font-size: 34px;
    font-weight: bold;
    line-height: 26px;
}

.wm-du {
    position: absolute;
    left: 68px;
    top: 37px;
    font-family: "Liberation Sans", sans-serif;
    font-size: 18px;
    font-weight: bold;
    line-height: 16px;
}

.wm-cn {
    position: absolute;
    left: 101px;
    top: 29px;
    font-size: 24px;
    font-weight: bold;
    line-height: 24px;
}

.wm-url {
    position: absolute;
    left: 6px;
    top: 54px;
    font-family: "Liberation Sans", sans-serif;
    font-size: 20px;
    letter-spacing: 0.300px;
    line-height: 20px;
}
```
